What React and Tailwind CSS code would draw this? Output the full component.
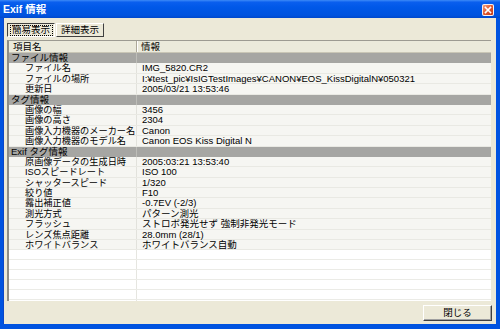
import React from "react";

const groups = [
  {
    name: "ファイル情報",
    items: [
      ["ファイル名", "IMG_5820.CR2"],
      ["ファイルの場所", "I:¥test_pic¥IsIGTestImages¥CANON¥EOS_KissDigitalN¥050321"],
      ["更新日", "2005/03/21 13:53:46"],
    ],
  },
  {
    name: "タグ情報",
    items: [
      ["画像の幅", "3456"],
      ["画像の高さ", "2304"],
      ["画像入力機器のメーカー名", "Canon"],
      ["画像入力機器のモデル名", "Canon EOS Kiss Digital N"],
    ],
  },
  {
    name: "Exif タグ情報",
    items: [
      ["原画像データの生成日時", "2005:03:21 13:53:40"],
      ["ISOスピードレート", "ISO 100"],
      ["シャッタースピード", "1/320"],
      ["絞り値", "F10"],
      ["露出補正値", "-0.7EV (-2/3)"],
      ["測光方式", "パターン測光"],
      ["フラッシュ", "ストロボ発光せず 強制非発光モード"],
      ["レンズ焦点距離", "28.0mm (28/1)"],
      ["ホワイトバランス", "ホワイトバランス自動"],
    ],
  },
];

function GroupRow({ name }) {
  return (
    <div className="flex h-[10.4px] shrink-0 bg-[#a6a6a3] leading-[10px]">
      <div className="w-[128px] shrink-0 border-r border-[#bdbdb8] pl-[2px] whitespace-nowrap text-[9.5px]">
        {name}
      </div>
      <div className="flex-1" />
    </div>
  );
}

function ItemRow({ k, v }) {
  return (
    <div className="flex h-[10.4px] shrink-0 bg-[#f6f6f2] border-b border-[#e9e9e3] leading-[10px]">
      <div className="w-[128px] shrink-0 border-r border-[#e2e2dc] pl-[16px] whitespace-nowrap text-[9.2px]">
        {k}
      </div>
      <div className="flex-1 pl-[5px] whitespace-nowrap text-[9.5px]">{v}</div>
    </div>
  );
}

function EmptyRow() {
  return (
    <div className="flex h-[10px] shrink-0 bg-white border-b border-[#ebebe6]">
      <div className="w-[128px] shrink-0 border-r border-[#e6e6e0]" />
      <div className="flex-1" />
    </div>
  );
}

export default function App() {
  return (
    <div className="w-[500px] h-[329px] overflow-hidden flex flex-col bg-[#0053e0] font-[Liberation_Sans,Noto_Sans_CJK_JP,sans-serif] text-black">
      {/* Title bar */}
      <div className="h-[18px] shrink-0 flex items-center justify-between pl-[3px] pr-[6px] bg-[linear-gradient(#3d8af7_0%,#0a5fee_12%,#0058e8_40%,#0053df_85%,#0048cc_100%)]">
        <span className="text-white font-bold text-[10.5px] leading-none">Exif 情報</span>
        <div className="w-[12px] h-[12px] mt-[1px] rounded-[2px] border border-white/90 bg-[linear-gradient(135deg,#f0a080_0%,#e2582e_50%,#c03a1a_100%)] flex items-center justify-center">
          <svg width="8" height="8" viewBox="0 0 8 8">
            <path d="M1.5 1.5 L6.5 6.5 M6.5 1.5 L1.5 6.5" stroke="white" strokeWidth="1.6" strokeLinecap="square" />
          </svg>
        </div>
      </div>

      {/* Body */}
      <div className="flex-1 ml-[3px] mr-[4px] mb-[5px] bg-[#ece9d8] flex flex-col border-l border-[#0a46c8]">
        {/* Tabs */}
        <div className="flex pl-[3px] pt-[5px] h-[19px] shrink-0 gap-[1px]">
          <div className="w-[48px] h-[14px] border border-t-[#404040] border-l-[#404040] border-r-white border-b-white bg-[#ece9d8] flex items-center justify-center">
            <div className="w-[43px] h-[11px] border border-dotted border-black flex items-center justify-center text-[9.5px] leading-none">
              簡易表示
            </div>
          </div>
          <div className="w-[48px] h-[14px] border border-t-white border-l-white border-r-[#404040] border-b-[#404040] bg-[#ece9d8] flex items-center justify-center text-[9.5px] leading-none">
            詳細表示
          </div>
        </div>

        {/* List */}
        <div className="mt-[3px] ml-[3px] w-[484px] h-[261px] shrink-0 flex flex-col overflow-hidden bg-white border-l-2 border-t border-l-[#8e8d86] border-t-[#9c9b92]">
          {/* Header */}
          <div className="flex h-[12px] shrink-0 bg-[#ebeadb] border-b border-[#c9c6b6] leading-[11px] text-[9.5px]">
            <div className="w-[128px] shrink-0 border-r border-[#aca899] pl-[4px]">項目名</div>
            <div className="flex-1 pl-[3px] border-l border-white">情報</div>
          </div>
          {groups.map((g) => (
            <React.Fragment key={g.name}>
              <GroupRow name={g.name} />
              {g.items.map(([k, v]) => (
                <ItemRow key={k} k={k} v={v} />
              ))}
            </React.Fragment>
          ))}
          {Array.from({ length: 8 }).map((_, i) => (
            <EmptyRow key={i} />
          ))}
        </div>

        {/* Footer */}
        <div className="flex justify-end pr-[4px] mt-[4px]">
          <button className="w-[69px] h-[16px] bg-[#ece9d8] border border-t-white border-l-white border-r-[#404040] border-b-[#404040] shadow-[inset_-1px_-1px_0_#a0a0a0] flex items-center justify-center text-[9.5px] leading-none">
            閉じる
          </button>
        </div>
      </div>
    </div>
  );
}
